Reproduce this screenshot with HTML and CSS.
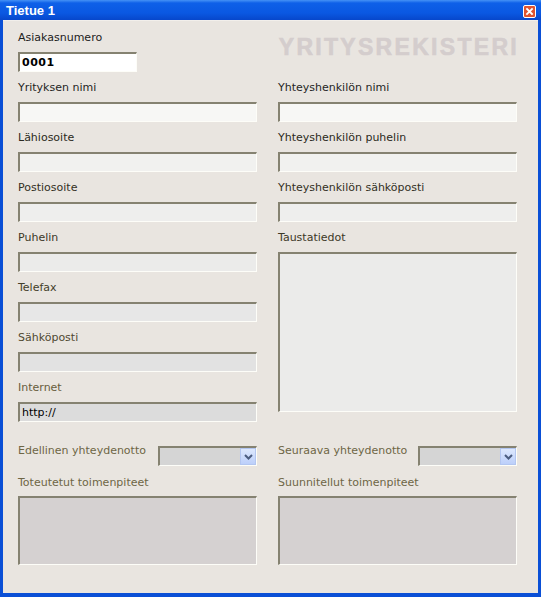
FILE: index.html
```html
<!DOCTYPE html>
<html lang="fi">

<head>
    <meta charset="UTF-8">
    <meta name="viewport" content="width=device-width, initial-scale=1.0">
    <title>Tietue 1</title>
    <link rel="stylesheet" href="styles.css">
</head>

<body>
    <div class="window">
        <div class="titlebar">
            <span class="title">Tietue 1</span>
            <span class="close">
                <svg width="13" height="13" viewBox="0 0 13 13">
                    <rect x="0.5" y="0.5" width="12" height="12" rx="1.5" fill="#e0542f" stroke="#fff" />
                    <path d="M4 4 L9 9 M9 4 L4 9" stroke="#fff" stroke-width="1.8" stroke-linecap="square" />
                </svg>
            </span>
        </div>

        <div class="content">
            <div class="columns">
                <div class="col">
                    <div class="field tone-0">
                        <label>Asiakasnumero</label>
                        <input type="text" class="input short" value="0001">
                    </div>
                    <div class="field tone-1">
                        <label>Yrityksen nimi</label>
                        <input type="text" class="input">
                    </div>
                    <div class="field tone-2">
                        <label>Lähiosoite</label>
                        <input type="text" class="input">
                    </div>
                    <div class="field tone-3">
                        <label>Postiosoite</label>
                        <input type="text" class="input">
                    </div>
                    <div class="field tone-4">
                        <label>Puhelin</label>
                        <input type="text" class="input">
                    </div>
                    <div class="field tone-5">
                        <label>Telefax</label>
                        <input type="text" class="input">
                    </div>
                    <div class="field tone-6">
                        <label>Sähköposti</label>
                        <input type="text" class="input">
                    </div>
                    <div class="field tone-7">
                        <label>Internet</label>
                        <input type="text" class="input" value="http://">
                    </div>
                </div>

                <div class="col">
                    <div class="watermark">YRITYSREKISTERI</div>
                    <div class="field tone-1">
                        <label>Yhteyshenkilön nimi</label>
                        <input type="text" class="input">
                    </div>
                    <div class="field tone-2">
                        <label>Yhteyshenkilön puhelin</label>
                        <input type="text" class="input">
                    </div>
                    <div class="field tone-3">
                        <label>Yhteyshenkilön sähköposti</label>
                        <input type="text" class="input">
                    </div>
                    <div class="field tone-4">
                        <label>Taustatiedot</label>
                        <textarea class="input background-notes"></textarea>
                    </div>
                </div>
            </div>

            <div class="columns lower">
                <div class="col">
                    <div class="date-row">
                        <label>Edellinen yhteydenotto</label>
                        <div class="select">
                            <span class="select-arrow">
                                <svg width="9" height="6" viewBox="0 0 9 6">
                                    <path d="M1 1 L4.5 4.5 L8 1" fill="none" stroke="#4b5d80" stroke-width="2" />
                                </svg>
                            </span>
                        </div>
                    </div>
                    <div class="field tone-8">
                        <label>Toteutetut toimenpiteet</label>
                        <textarea class="input actions"></textarea>
                    </div>
                </div>

                <div class="col">
                    <div class="date-row">
                        <label>Seuraava yhteydenotto</label>
                        <div class="select">
                            <span class="select-arrow">
                                <svg width="9" height="6" viewBox="0 0 9 6">
                                    <path d="M1 1 L4.5 4.5 L8 1" fill="none" stroke="#4b5d80" stroke-width="2" />
                                </svg>
                            </span>
                        </div>
                    </div>
                    <div class="field tone-8">
                        <label>Suunnitellut toimenpiteet</label>
                        <textarea class="input actions"></textarea>
                    </div>
                </div>
            </div>
        </div>
    </div>
</body>

</html>
```

FILE: styles.css
```css
body {
    margin: 0;
    padding: 0;
    font-family: "DejaVu Sans", Verdana, sans-serif;
    font-size: 11px;
}

.window {
    width: 541px;
    height: 597px;
    box-sizing: border-box;
    background: #0a4fd6;
    padding: 0 3px 4px 3px;
    display: flex;
    flex-direction: column;
}

.titlebar {
    height: 20px;
    margin: 0 -3px;
    padding: 0 5px 0 6px;
    background: linear-gradient(#4592f6 0, #0e60e8 3px, #0a58e2 13px, #0747cb 20px);
    display: flex;
    align-items: center;
    justify-content: space-between;
}

.title {
    color: white;
    font-family: "Liberation Sans", Arial, sans-serif;
    font-weight: bold;
    font-size: 13px;
}

.close {
    display: flex;
    margin-top: 2px;
}

.content {
    flex: 1;
    background: #e9e5e0;
    border-top: 1px solid #f2efeb;
    padding: 10px 21px 0 15px;
}

.columns {
    display: grid;
    grid-template-columns: 239px 239px;
    column-gap: 21px;
}

.col {
    display: flex;
    flex-direction: column;
    gap: 9px;
}

.field {
    display: flex;
    flex-direction: column;
    gap: 7px;
}

label {
    line-height: 14px;
    white-space: nowrap;
}

.input {
    display: block;
    width: 239px;
    height: 20px;
    box-sizing: border-box;
    margin: 0;
    padding: 0 2px;
    border-top: 2px solid #858271;
    border-left: 2px solid #858271;
    border-bottom: 1px solid #fdfdf8;
    border-right: 1px solid #fdfdf8;
    font-family: "DejaVu Sans", Verdana, sans-serif;
    font-size: 11px;
    color: black;
    outline: none;
    resize: none;
}

.input.short {
    width: 119px;
    background: white;
    font-weight: bold;
    font-size: 11px;
    letter-spacing: 0.5px;
}

.background-notes {
    height: 160px;
}

.actions {
    height: 69px;
}

.watermark {
    height: 41px;
    box-sizing: border-box;
    padding-top: 5px;
    text-align: right;
    font-family: "Liberation Sans", Arial, sans-serif;
    font-weight: bold;
    font-size: 23px;
    line-height: 23px;
    letter-spacing: 2.3px;
    margin-right: -2px;
    color: #d4cdcd;
    -webkit-text-stroke: 0.6px #d4cdcd;
}

.tone-0 label { color: #1c1c1c; }
.tone-1 label { color: #25251f; }
.tone-2 label { color: #2b2a21; }
.tone-3 label { color: #333024; }
.tone-4 label { color: #3c3827; }
.tone-5 label { color: #433e2a; }
.tone-6 label { color: #504931; }
.tone-7 label { color: #675d3d; }
.tone-8 label { color: #6e6545; }

.tone-1 .input { background: #f7f7f5; }
.tone-2 .input { background: #f1f1ef; }
.tone-3 .input { background: #eeeeed; }
.tone-4 .input { background: #ebebea; }
.tone-5 .input { background: #e7e7e7; }
.tone-6 .input { background: #e2e2e2; }
.tone-7 .input { background: #dcdcdc; }
.tone-8 .input { background: #d5d1d1; }

.lower {
    margin-top: 22px;
}

.lower .col {
    gap: 9px;
}

.lower .field {
    gap: 6px;
}

.date-row {
    display: flex;
    justify-content: space-between;
    align-items: flex-start;
    height: 23px;
}

.date-row label {
    color: #6e6545;
}

.select {
    margin-top: 2px;
    width: 99px;
    height: 20px;
    box-sizing: border-box;
    background: #d5d5d5;
    border-top: 2px solid #858271;
    border-left: 2px solid #858271;
    border-bottom: 1px solid #fdfdf8;
    border-right: 1px solid #fdfdf8;
    display: flex;
    justify-content: flex-end;
}

.select-arrow {
    width: 16px;
    height: 17px;
    box-sizing: border-box;
    background: linear-gradient(#dde8fd, #bccffa);
    border: 1px solid #b3c6f0;
    display: flex;
    align-items: center;
    justify-content: center;
}
```
